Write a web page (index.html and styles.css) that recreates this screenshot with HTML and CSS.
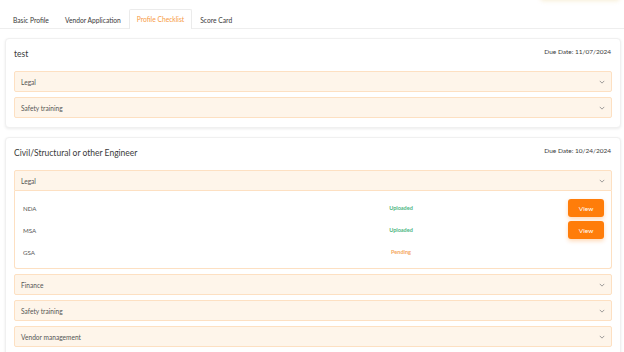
FILE: index.html
```html
<!DOCTYPE html>
<html>
<head>
<meta charset="utf-8">
<link rel="stylesheet" href="styles.css">
</head>
<body>
<div class="corner-glow"></div>
<nav class="tabs">
  <div class="tab">Basic Profile</div>
  <div class="tab">Vendor Application</div>
  <div class="tab active">Profile Checklist</div>
  <div class="tab">Score Card</div>
</nav>
<main class="content">
  <section class="card">
    <div class="card-head">
      <div class="card-title">test</div>
      <div class="due">Due Date: 11/07/2024</div>
    </div>
    <div class="acc-list">
      <div class="acc">
        <div class="acc-head"><span>Legal</span><svg class="chev" viewBox="0 0 8 5"><path d="M1 1l3 3 3-3"/></svg></div>
      </div>
      <div class="acc">
        <div class="acc-head"><span>Safety training</span><svg class="chev" viewBox="0 0 8 5"><path d="M1 1l3 3 3-3"/></svg></div>
      </div>
    </div>
  </section>
  <section class="card">
    <div class="card-head">
      <div class="card-title">Civil/Structural or other Engineer</div>
      <div class="due">Due Date: 10/24/2024</div>
    </div>
    <div class="acc-list">
      <div class="acc open">
        <div class="acc-head"><span>Legal</span><svg class="chev" viewBox="0 0 8 5"><path d="M1 1l3 3 3-3"/></svg></div>
        <div class="acc-body">
          <div class="row"><span class="doc">NDA</span><span class="status ok">Uploaded</span><span class="act"><button class="view">View</button></span></div>
          <div class="row"><span class="doc">MSA</span><span class="status ok">Uploaded</span><span class="act"><button class="view">View</button></span></div>
          <div class="row"><span class="doc">GSA</span><span class="status pending">Pending</span><span class="act"></span></div>
        </div>
      </div>
      <div class="acc">
        <div class="acc-head"><span>Finance</span><svg class="chev" viewBox="0 0 8 5"><path d="M1 1l3 3 3-3"/></svg></div>
      </div>
      <div class="acc">
        <div class="acc-head"><span>Safety training</span><svg class="chev" viewBox="0 0 8 5"><path d="M1 1l3 3 3-3"/></svg></div>
      </div>
      <div class="acc">
        <div class="acc-head"><span>Vendor management</span><svg class="chev" viewBox="0 0 8 5"><path d="M1 1l3 3 3-3"/></svg></div>
      </div>
    </div>
  </section>
</main>
</body>
</html>
```
FILE: styles.css
```css
* { box-sizing: border-box; }
html, body { margin: 0; padding: 0; }
body {
  width: 624px;
  height: 352px;
  overflow: hidden;
  background: #ffffff;
  font-family: "Lato", "Open Sans", sans-serif;
  color: #333;
  position: relative;
}
.corner-glow {
  position: absolute;
  top: -8px;
  right: 4px;
  width: 80px;
  height: 8px;
  border-radius: 40px;
  box-shadow: 0 1px 4px rgba(230, 200, 120, 0.3);
}
.tabs {
  display: flex;
  align-items: flex-end;
  height: 29px;
  padding-left: 5px;
  border-bottom: 1px solid #eeeeee;
}
.tab {
  height: 19px;
  line-height: 18px;
  padding: 0 7px;
  font-size: 6.7px;
  color: #3a3a3a;
  border: 1px solid transparent;
  border-bottom: none;
  margin-bottom: -1px;
}
.tab.active {
  color: #f79a45;
  background: #fff;
  border-color: #ebebeb;
  height: 20px;
  border-radius: 2px 2px 0 0;
}
.content {
  padding: 9px 3px 0 5px;
  display: flex;
  flex-direction: column;
  gap: 9px;
}
.card {
  border: 1px solid #f0f0f0;
  border-radius: 4px;
  box-shadow: 0 1px 3px rgba(0, 0, 0, 0.08);
  padding: 0 8px 9px 8px;
  background: #fff;
}
.card-head {
  height: 32px;
  display: flex;
  justify-content: space-between;
  align-items: flex-start;
}
.card-title {
  font-size: 8.5px;
  margin-top: 10px;
  color: #3a3a3a;
}
.due {
  font-size: 6.5px;
  margin-top: 9px;
  margin-right: 1px;
  color: #3a3a3a;
}
.acc-list {
  display: flex;
  flex-direction: column;
  gap: 5px;
}
.acc-head {
  height: 21px;
  display: flex;
  align-items: center;
  justify-content: space-between;
  padding: 0 6px 0 6px;
  background: #fef5ea;
  border: 1.5px solid #fde0c2;
  border-radius: 2px;
  font-size: 6.6px;
  color: #555;
}
.acc.open .acc-head {
  border-radius: 2px 2px 0 0;
}
.chev {
  width: 6px;
  height: 4px;
  fill: none;
  stroke: #888;
  stroke-width: 1.1;
}
.acc-body {
  border: 1.5px solid #fde0c2;
  border-top: none;
  border-radius: 0 0 3px 3px;
  padding: 6px 7px 5px 8px;
  display: flex;
  flex-direction: column;
}
.row {
  height: 22px;
  display: grid;
  grid-template-columns: 345px 66px 1fr;
  align-items: center;
  font-size: 6.2px;
}
.doc { color: #555; }
.status {
  text-align: center;
  font-weight: 700;
  font-size: 5.5px;
}
.status.ok { color: #4cb582; }
.status.pending { color: #f5a660; }
.act {
  display: flex;
  justify-content: flex-end;
}
.view {
  width: 36px;
  height: 18px;
  border: none;
  border-radius: 3px;
  background: #ff7d0a;
  color: #fff;
  font-family: inherit;
  font-size: 6.5px;
  padding: 0;
  box-shadow: 0 2px 4px rgba(255, 125, 10, 0.3);
}
```
